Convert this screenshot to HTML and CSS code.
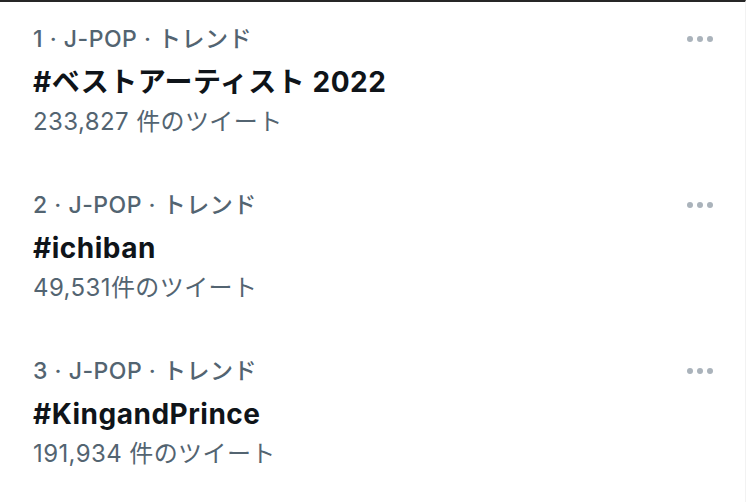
FILE: index.html
```html
<!DOCTYPE html>
<html lang="ja">
<head>
    <meta charset="UTF-8">
    <meta name="viewport" content="width=device-width, initial-scale=1.0">
    <title>トレンド</title>
    <link rel="stylesheet" href="styles.css">
</head>
<body>
    <div class="trends">
        <div class="trend">
            <div class="trend-body">
                <div class="meta">1 · J-POP · トレンド</div>
                <div class="tag">#ベストアーティスト 2022</div>
                <div class="count">233,827 件のツイート</div>
            </div>
            <div class="more"><span></span><span></span><span></span></div>
        </div>

        <div class="trend">
            <div class="trend-body">
                <div class="meta">2 · J-POP · トレンド</div>
                <div class="tag">#ichiban</div>
                <div class="count">49,531件のツイート</div>
            </div>
            <div class="more"><span></span><span></span><span></span></div>
        </div>

        <div class="trend">
            <div class="trend-body">
                <div class="meta">3 · J-POP · トレンド</div>
                <div class="tag">#KingandPrince</div>
                <div class="count">191,934 件のツイート</div>
            </div>
            <div class="more"><span></span><span></span><span></span></div>
        </div>
    </div>
</body>
</html>
```

FILE: styles.css
```css
body {
    margin: 0;
    background-color: #ffffff;
    font-family: Inter, "Noto Sans CJK JP", sans-serif;
}

.trends {
    border-top: 2px solid #262626;
    border-right: 1px solid #f2f2f2;
    height: 500px;
    margin-right: 4px;
}

.trend {
    display: flex;
    justify-content: space-between;
    align-items: flex-start;
    padding: 17px 32px 29px 33px;
}

.meta {
    line-height: 40px;
    font-size: 23px;
    font-weight: 500;
    letter-spacing: 0.5px;
    color: #536471;
}

.tag {
    line-height: 46px;
    font-size: 28px;
    font-weight: 700;
    letter-spacing: 0.5px;
    color: #0f1419;
}

.count {
    line-height: 34px;
    font-size: 24px;
    letter-spacing: 0.4px;
    color: #536471;
}

.more {
    display: flex;
    gap: 4px;
    margin-top: 17px;
}

.more span {
    width: 6px;
    height: 6px;
    border-radius: 50%;
    background-color: #aab3bb;
}
```
